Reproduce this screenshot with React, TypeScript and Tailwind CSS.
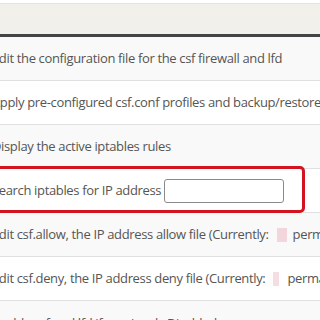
import React from 'react';

const rows = [
  { text: 'Edit the configuration file for the csf firewall and lfd', bg: 'bg-[#f9f9f9]' },
  { text: 'Apply pre-configured csf.conf profiles and backup/restore csf.conf', bg: 'bg-white' },
  { text: 'Display the active iptables rules', bg: 'bg-[#f9f9f9]' },
];

const App = () => {
  return (
    <div className="w-[320px] h-[320px] overflow-hidden bg-white text-[13px] tracking-[-0.35px] text-[#555] font-['Open_Sans',sans-serif]">
      {/* header band */}
      <div className="h-[4px] bg-white border-b border-[#e6e4dc]" />
      <div className="h-[33px] bg-[#f1f0eb] border-b-[3px] border-[#444]" />

      {/* rows */}
      <div className="-ml-[8px] w-[440px]">
        {rows.map((r) => (
          <div key={r.text} className={`h-[44px] flex items-center border-b border-[#e0e0e0] whitespace-nowrap ${r.bg}`}>
            {r.text}
          </div>
        ))}

        {/* search row with red highlight */}
        <div className="relative h-[44px] flex items-center border-b border-[#e0e0e0] bg-white whitespace-nowrap">
          <span>Search iptables for IP address</span>
          <input
            type="text"
            className="ml-[3px] w-[120px] h-[24px] border border-[#8a8a8a] rounded-[3px] bg-white"
          />
          <div className="absolute -left-[10px] w-[323px] -top-[3px] -bottom-[1px] border-[3px] border-[#d3141f] rounded-[5px] pointer-events-none" />
        </div>

        <div className="h-[44px] flex items-center border-b border-[#e0e0e0] bg-[#f9f9f9] whitespace-nowrap">
          <span>Edit csf.allow, the IP address allow file (Currently:</span>
          <span className="ml-[8px] w-[10px] h-[14px] bg-[#f3d6dc]" />
          <span className="ml-[6px]">permanent IPs)</span>
        </div>
        <div className="h-[44px] flex items-center border-b border-[#e0e0e0] bg-white whitespace-nowrap">
          <span>Edit csf.deny, the IP address deny file (Currently:</span>
          <span className="ml-[8px] w-[6px] h-[14px] bg-[#f5dde2]" />
          <span className="ml-[8px]">permanent IPs)</span>
        </div>
        <div className="h-[44px] pt-[3px] flex items-center border-b border-[#e0e0e0] bg-[#f9f9f9] whitespace-nowrap">
          Enable csf and lfd if previously Disabled
        </div>
      </div>
    </div>
  );
};

export default App;
